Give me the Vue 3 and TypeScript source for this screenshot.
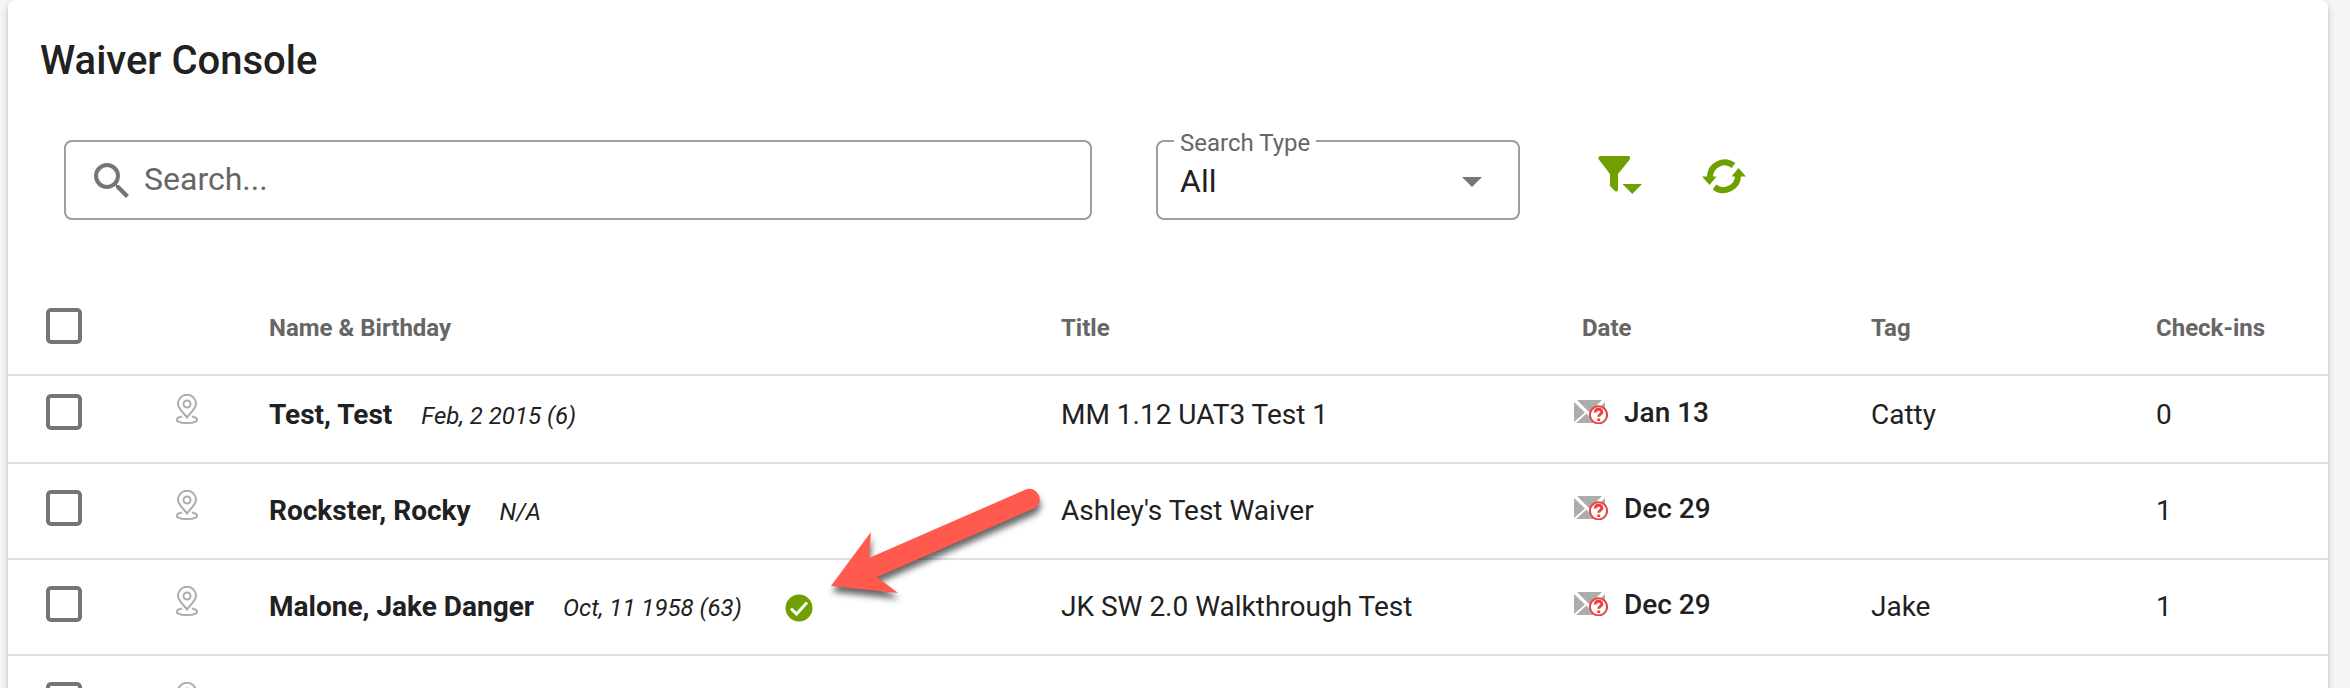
<script setup lang="ts">
import { ref } from 'vue'

interface Waiver {
  id: number
  name?: string
  birthday?: string
  verified?: boolean
  title?: string
  date?: string
  tag?: string
  checkIns?: number
}

const search = ref('')
const searchType = ref('All')
const selected = ref<number[]>([])

const waivers: Waiver[] = [
  { id: 1, name: 'Test, Test', birthday: 'Feb, 2 2015 (6)', title: 'MM 1.12 UAT3 Test 1', date: 'Jan 13', tag: 'Catty', checkIns: 0 },
  { id: 2, name: 'Rockster, Rocky', birthday: 'N/A', title: "Ashley's Test Waiver", date: 'Dec 29', checkIns: 1 },
  { id: 3, name: 'Malone, Jake Danger', birthday: 'Oct, 11 1958 (63)', verified: true, title: 'JK SW 2.0 Walkthrough Test', date: 'Dec 29', tag: 'Jake', checkIns: 1 },
  { id: 4 },
]

function toggleAll(event: Event) {
  const on = (event.target as HTMLInputElement).checked
  selected.value = on ? waivers.map((w) => w.id) : []
}
</script>

<template>
  <div class="page">
    <main class="card">
      <h1>Waiver Console</h1>

      <div class="toolbar">
        <label class="search">
          <svg class="search-icon" viewBox="3 3 17.5 17.5" aria-hidden="true">
            <path d="M15.5 14h-.79l-.28-.27A6.47 6.47 0 0 0 16 9.5 6.5 6.5 0 1 0 9.5 16c1.61 0 3.09-.59 4.23-1.57l.27.28v.79l5 4.99L20.49 19l-4.99-5zm-6 0a4.5 4.5 0 1 1 0-9 4.5 4.5 0 0 1 0 9z" />
          </svg>
          <input v-model="search" type="text" placeholder="Search..." aria-label="Search" />
        </label>

        <div class="select">
          <label for="search-type">Search Type</label>
          <select id="search-type" v-model="searchType">
            <option>All</option>
          </select>
          <svg viewBox="0 0 20 10" aria-hidden="true"><path d="M0 0h20L10 10z" /></svg>
        </div>

        <div class="actions">
          <button type="button" aria-label="Filter">
            <svg viewBox="0 2 44 40" aria-hidden="true">
              <path d="M2 2h29q2 1 .4 4L20 20v16q-1 2.500-3 1L12 32V20L.5 5Q0 2.500 2 2zM24.500 30h19.500L34.300 40z" />
            </svg>
          </button>
          <button type="button" aria-label="Refresh">
            <svg viewBox="0 0 44 40" aria-hidden="true">
              <path class="ring" d="M31.500 9.500A14.600 14.600 0 0 0 8 21M12.500 31A14.600 14.600 0 0 0 36 19.500" />
              <path d="M0 20.500h14.500L7.500 29zM29.500 20.500H44L36.500 12z" />
            </svg>
          </button>
        </div>
      </div>

      <table>
        <colgroup>
          <col class="c-check" /><col class="c-pin" /><col class="c-name" /><col class="c-title" />
          <col class="c-date" /><col class="c-tag" /><col class="c-count" />
        </colgroup>
        <thead>
          <tr>
            <th class="check"><input type="checkbox" aria-label="Select all" @change="toggleAll" /></th>
            <td></td>
            <th>Name &amp; Birthday</th>
            <th>Title</th>
            <th class="date-head">Date</th>
            <th>Tag</th>
            <th>Check-ins</th>
          </tr>
        </thead>
        <tbody>
          <tr v-for="w in waivers" :key="w.id">
            <td class="check">
              <input v-model="selected" type="checkbox" :value="w.id" :aria-label="`Select ${w.name ?? 'waiver'}`" />
            </td>
            <td>
              <svg class="pin" viewBox="0 0 22 30" aria-hidden="true">
                <path d="M11 23.500C7.500 18.500 2 14.500 2 9.700a9 9 0 0 1 18 0c0 4.800-5.500 8.800-9 13.800z" />
                <circle cx="11" cy="10" r="3.500" />
                <path d="M6 22.500C2.500 23.200.8 24.500.8 25.800c0 1.900 4.600 3.300 10.200 3.300s10.200-1.400 10.200-3.300c0-1.300-1.700-2.600-5.200-3.300" />
              </svg>
            </td>
            <td>
              <div v-if="w.name" class="person">
                <span><strong>{{ w.name }}</strong><em>{{ w.birthday }}</em></span>
                <span v-if="w.verified" class="verified">
                  <svg class="tick" viewBox="0 0 28 28" role="img" aria-label="Verified">
                    <circle cx="14" cy="14" r="13.500" />
                    <path d="M6 14.500l5.500 5.500L22 8.500" />
                  </svg>
                  <svg class="arrow" viewBox="0 0 220 124" aria-hidden="true">
                    <path d="M3 99L43 45L41 71L199 2A10.500 10.500 0 0 1 207 21L49 90L70 106z" />
                  </svg>
                </span>
              </div>
            </td>
            <td>{{ w.title }}</td>
            <td>
              <div v-if="w.date" class="date">
                <svg viewBox="0 0 34 24" aria-hidden="true">
                  <path class="mail" d="M3 0h25L15.500 12.500zM0 2l11 10.500L0 22zM2 23l10.500-9.500 3 3 3-3L28 23zM31 2v16L20 12.500z" />
                  <circle cx="24.500" cy="14.800" r="8.600" />
                  <path class="q" d="M21.300 12.500c0-4.200 6.600-4.100 6.600-.4 0 2.300-3.200 2.300-3.200 4.600M24.700 18.500v2.400" />
                </svg>
                <span>{{ w.date }}</span>
              </div>
            </td>
            <td>{{ w.tag }}</td>
            <td>{{ w.checkIns }}</td>
          </tr>
        </tbody>
      </table>
    </main>
  </div>
</template>

<style>
body {
  background: #f5f5f5;
}
</style>

<style scoped>
.page {
  box-sizing: border-box;
  height: 100vh;
  padding: 0 22px 0 8px;
  overflow: hidden;
  font-family: Roboto, "Liberation Sans", sans-serif;
  font-size: 28px;
  line-height: 42px;
  color: #212121;
}
.card {
  min-height: 100%;
  background: #fff;
  border-radius: 8px;
  box-shadow: 0 6px 2px -4px rgba(0, 0, 0, 0.2), 0 4px 4px rgba(0, 0, 0, 0.14), 0 2px 10px rgba(0, 0, 0, 0.12);
}
h1 {
  margin: 0;
  padding: 37px 32px 55px;
  font-size: 40px;
  line-height: 48px;
  font-weight: 500;
}
.toolbar {
  display: flex;
  padding: 0 56px 58px;
  gap: 64px;
}
.search,
.select {
  box-sizing: border-box;
  position: relative;
  display: flex;
  align-items: center;
  height: 80px;
  border: 2px solid #9e9e9e;
  border-radius: 8px;
}
.search {
  flex: 0 1 1028px;
  gap: 15px;
  padding: 0 28px;
}
.search-icon {
  flex: none;
  width: 35px;
  height: 35px;
  fill: #757575;
}
input[type='text'],
select {
  flex: 1;
  box-sizing: border-box;
  min-width: 0;
  height: 100%;
  padding: 0 0 2px;
  border: 0;
  outline: 0;
  background: none;
  font: inherit;
  font-size: 32px;
  color: #212121;
}
input::placeholder {
  color: #666;
  opacity: 1;
}
.select {
  flex: 0 0 364px;
  padding: 4px 36px 0 22px;
}
.select label {
  position: absolute;
  top: -13px;
  left: 16px;
  padding: 0 6px;
  background: #fff;
  font-size: 24px;
  line-height: 28px;
  color: #666;
}
select {
  appearance: none;
}
.select svg {
  width: 20px;
  height: 10px;
  fill: #757575;
  pointer-events: none;
}
.actions {
  display: flex;
  align-items: flex-start;
  gap: 60px;
  padding: 16px 0 0 14px;
}
button {
  display: flex;
  padding: 0;
  border: 0;
  background: none;
}
button svg {
  width: 44px;
  height: 40px;
  fill: #70a000;
}
button .ring {
  fill: none;
  stroke: #70a000;
  stroke-width: 6;
}
table {
  width: 100%;
  table-layout: fixed;
  border-collapse: separate;
  border-spacing: 0;
}
.c-check { width: 168px; }
.c-pin { width: 93px; }
.c-name { width: 792px; }
.c-title { width: 513px; }
.c-date { width: 297px; }
.c-tag { width: 285px; }
.c-count { width: 172px; }
th,
td {
  box-sizing: border-box;
  height: 96px;
  padding: 26px 0 0;
  border-bottom: 2px solid #e0e0e0;
  text-align: left;
  vertical-align: top;
}
thead th,
thead td {
  height: 98px;
  padding-top: 30px;
  font-size: 24px;
  line-height: 40px;
  font-weight: 700;
  color: #666;
}
tbody tr:first-child td {
  height: 88px;
  padding-top: 18px;
}
.check {
  padding-left: 38px;
}
.date-head {
  padding-left: 8px;
}
input[type='checkbox'] {
  appearance: none;
  box-sizing: border-box;
  display: block;
  width: 36px;
  height: 36px;
  margin: 0;
  border: 4px solid #757575;
  border-radius: 5px;
}
input[type='checkbox']:checked {
  background: #70a000;
}
.pin {
  display: block;
  width: 22px;
  height: 30px;
  fill: none;
  stroke: #adadad;
  stroke-width: 2;
}
.person {
  display: flex;
  gap: 43px;
  white-space: nowrap;
}
em {
  margin-left: 29px;
  font-size: 24px;
}
.verified {
  position: relative;
  padding-top: 8px;
}
.tick {
  display: block;
  width: 28px;
  height: 28px;
  fill: #70a000;
}
.tick path {
  fill: none;
  stroke: #fff;
  stroke-width: 3;
}
.arrow {
  position: absolute;
  left: 43px;
  top: -99px;
  width: 220px;
  height: 124px;
  overflow: visible;
  fill: #ff5a4d;
  filter: drop-shadow(1px 6px 3px rgba(0, 0, 0, 0.6));
  pointer-events: none;
}
.date {
  display: flex;
  gap: 16px;
  margin-top: -2px;
  font-weight: 500;
}
.date svg {
  width: 34px;
  height: 24px;
  margin-top: 8px;
}
.mail {
  fill: #adadad;
}
.date circle {
  fill: #fff;
  stroke: #e94340;
  stroke-width: 2;
}
.q {
  fill: none;
  stroke: #e94340;
  stroke-width: 3;
}
</style>
